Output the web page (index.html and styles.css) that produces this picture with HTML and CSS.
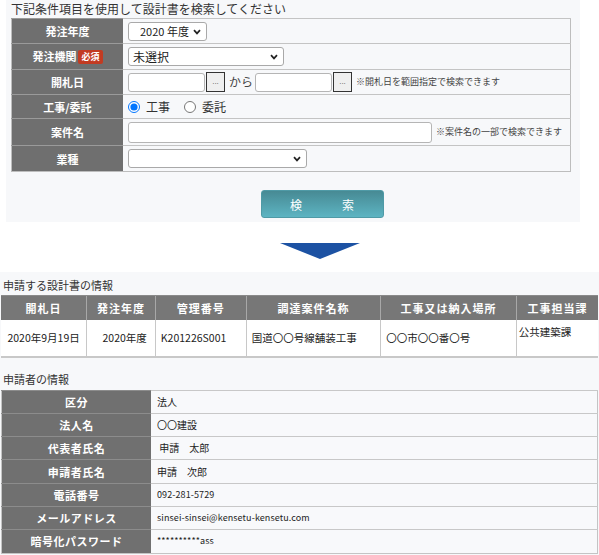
FILE: index.html
```html
<!DOCTYPE html>
<html lang="ja">
<head>
  <meta charset="UTF-8">
  <meta name="viewport" content="width=device-width, initial-scale=1.0">
  <title>設計書検索</title>
  <link rel="stylesheet" href="styles.css">
</head>
<body>

  <div class="search-panel">
    <p class="panel-title">下記条件項目を使用して設計書を検索してください</p>
    <table class="search-table">
      <tr class="row-1">
        <th>発注年度</th>
        <td>
          <span class="select-box select-year">
            <select><option>2020 年度</option></select>
            <svg class="chevron" width="8" height="6" viewBox="0 0 8 6"><path d="M1 1.2 L4 4.4 L7 1.2" fill="none" stroke="#222" stroke-width="1.7"/></svg>
          </span>
        </td>
      </tr>
      <tr class="row-2">
        <th>発注機関<span class="required">必須</span></th>
        <td>
          <span class="select-box select-org">
            <select><option>未選択</option></select>
            <svg class="chevron" width="8" height="6" viewBox="0 0 8 6"><path d="M1 1.2 L4 4.4 L7 1.2" fill="none" stroke="#222" stroke-width="1.7"/></svg>
          </span>
        </td>
      </tr>
      <tr class="row-3">
        <th>開札日</th>
        <td>
          <div class="field-line">
            <input type="text" class="input-date">
            <button class="pick-button">...</button>
            <span class="text-between">から</span>
            <input type="text" class="input-date">
            <button class="pick-button">...</button>
            <span class="note">※開札日を範囲指定で検索できます</span>
          </div>
        </td>
      </tr>
      <tr class="row-4">
        <th>工事/委託</th>
        <td>
          <div class="field-line">
            <label class="radio"><input type="radio" name="kind" checked> 工事</label>
            <label class="radio"><input type="radio" name="kind"> 委託</label>
          </div>
        </td>
      </tr>
      <tr class="row-5">
        <th>案件名</th>
        <td>
          <div class="field-line">
            <input type="text" class="input-name">
            <span class="note">※案件名の一部で検索できます</span>
          </div>
        </td>
      </tr>
      <tr class="row-6">
        <th>業種</th>
        <td>
          <span class="select-box select-kind">
            <select><option></option></select>
            <svg class="chevron" width="8" height="6" viewBox="0 0 8 6"><path d="M1 1.2 L4 4.4 L7 1.2" fill="none" stroke="#222" stroke-width="1.7"/></svg>
          </span>
        </td>
      </tr>
    </table>
    <button class="search-button">検　　　索</button>
  </div>

  <div class="arrow-area">
    <svg class="arrow" width="80" height="16" viewBox="0 0 80 16">
      <polygon points="0,0 80,0 40,16" fill="#1c52a3"/>
    </svg>
  </div>

  <div class="result-panel">
    <p class="section-title">申請する設計書の情報</p>
    <table class="doc-table">
      <tr class="doc-head">
        <th class="col-date">開札日</th>
        <th class="col-year">発注年度</th>
        <th class="col-no">管理番号</th>
        <th class="col-title">調達案件名称</th>
        <th class="col-place">工事又は納入場所</th>
        <th class="col-dept">工事担当課</th>
      </tr>
      <tr class="doc-row">
        <td class="center">2020年9月19日</td>
        <td class="right">2020年度</td>
        <td>K201226S001</td>
        <td>国道〇〇号線舗装工事</td>
        <td>〇〇市〇〇番〇号</td>
        <td class="top">公共建築課</td>
      </tr>
    </table>

    <p class="section-title section-second">申請者の情報</p>
    <table class="applicant-table">
      <tr><th>区分</th><td>法人</td></tr>
      <tr><th>法人名</th><td>〇〇建設</td></tr>
      <tr><th>代表者氏名</th><td>&nbsp;申請　太郎</td></tr>
      <tr><th>申請者氏名</th><td>申請　次郎</td></tr>
      <tr><th>電話番号</th><td class="mono">092-281-5729</td></tr>
      <tr><th>メールアドレス</th><td class="mono">sinsei-sinsei@kensetu-kensetu.com</td></tr>
      <tr><th>暗号化パスワード</th><td class="mono">**********ass</td></tr>
    </table>
  </div>

</body>
</html>
```

FILE: styles.css
```css
body {
  margin: 0;
  padding: 0;
  background-color: #ffffff;
  font-family: "Noto Sans CJK JP", sans-serif;
  color: #333;
  width: 599px;
}

p {
  margin: 0;
}

/* search form */

.search-panel {
  margin-left: 6px;
  width: 569px;
  height: 222px;
  padding-left: 5px;
  background-color: #f7f8fa;
  overflow: hidden;
}

.panel-title {
  font-size: 12px;
  line-height: 16px;
  padding-top: 1px;
  color: #333;
}

.search-table {
  margin-top: 1px;
  width: 560px;
  border-collapse: collapse;
  border: 1px solid #bdbdbd;
}

.search-table th {
  width: 111px;
  background-color: #6f6f6f;
  color: white;
  font-size: 11px;
  font-weight: bold;
  text-align: center;
  border-top: 1px solid #9a9a9a;
  padding: 0;
  line-height: 14px;
}

.search-table td {
  border-top: 1px solid #c4c4c4;
  padding: 0 0 0 5px;
  font-size: 12px;
  line-height: 14px;
}

.row-1 { height: 25px; }
.row-2 { height: 26px; }
.row-3 { height: 25px; }
.row-4 { height: 24px; }
.row-5 { height: 27px; }
.row-6 { height: 26px; }

.required {
  display: inline-block;
  margin-left: 2px;
  padding: 0 3px;
  background-color: #c23b22;
  color: white;
  font-size: 9px;
  line-height: 14px;
  border-radius: 2px;
  vertical-align: 1px;
}

.select-box {
  position: relative;
  display: block;
  height: 19px;
}

.select-box select {
  appearance: none;
  width: 100%;
  height: 19px;
  font-family: "Noto Sans CJK JP", sans-serif;
  font-size: 12px;
  color: #222;
  background-color: white;
  border: 1px solid #a9a9a9;
  border-radius: 3px;
  padding: 0 16px 0 4px;
  display: block;
}

.chevron {
  position: absolute;
  right: 6px;
  top: 7px;
}

.select-year { width: 79px; }
.select-year select { padding: 0 10px 0 11px; font-size: 11px; }
.select-org { width: 156px; }
.select-kind { width: 179px; }

.field-line {
  display: flex;
  align-items: center;
  white-space: nowrap;
}

input[type="text"] {
  height: 19px;
  box-sizing: border-box;
  border: 1px solid #b5b5b5;
  border-radius: 3px;
  background-color: white;
  padding: 0 3px;
}

.input-date { width: 77px; }
.input-name { width: 304px; height: 21px !important; }

.pick-button {
  width: 19px;
  height: 20px;
  margin-left: 1px;
  padding: 0;
  border: 1px solid #333;
  background-color: #efefef;
  color: #555;
  font-size: 8px;
  line-height: 10px;
}

.text-between {
  margin: 0 2px 0 4px;
  font-size: 12px;
  color: #444;
}

.note {
  margin-left: 4px;
  font-size: 9px;
  color: #444;
}

.radio {
  display: flex;
  align-items: center;
  margin-right: 14px;
  font-size: 12px;
  color: #333;
}

.radio input {
  margin: 0 6px 0 0;
  width: 12px;
  height: 12px;
}

.search-button {
  display: block;
  margin: 18px 0 0 250px;
  width: 123px;
  height: 28px;
  border: 1px solid #4f9aa6;
  border-radius: 3px;
  background: linear-gradient(#478a94, #5db4c2);
  color: white;
  font-family: "Noto Sans CJK JP", sans-serif;
  font-size: 12px;
  letter-spacing: 1px;
}

.arrow-area {
  height: 50px;
  padding-left: 280px;
  box-sizing: border-box;
  padding-top: 21px;
}

.arrow {
  display: block;
}

/* results */

.result-panel {
  background-color: #f7f8fa;
  height: 283px;
  padding-left: 1px;
}

.section-title {
  font-size: 11px;
  line-height: 14px;
  padding: 6px 0 3px 2px;
  color: #333;
}

.section-second {
  padding-top: 14px;
  padding-bottom: 4px;
}

.doc-table {
  width: 597px;
  border-collapse: collapse;
  border-bottom: 2px solid #c8c8c8;
}

.doc-head {
  height: 24px;
}

.doc-row {
  height: 37px;
}

.doc-table th {
  padding: 0;
  background-color: #777777;
  color: white;
  font-size: 11px;
  font-weight: bold;
  letter-spacing: 1px;
  line-height: 14px;
  border-left: 1px solid #a8a8a8;
  border-top: 1px solid #8a8a8a;
}

.doc-table th:first-child,
.doc-table td:first-child {
  border-left: none;
}

.col-date { width: 86px; }
.col-year { width: 68px; }
.col-no { width: 90px; }
.col-title { width: 135px; }
.col-place { width: 136px; }
.col-dept { width: 82px; }

.doc-table td {
  padding: 0 5px;
  background-color: white;
  font-size: 10.5px;
  line-height: 14px;
  color: #222;
  border-left: 1px solid #c8c8c8;
}

.doc-table .center { text-align: center; padding: 0; }
.doc-table .right { text-align: right; padding-right: 8px; }
.doc-table .top { vertical-align: top; padding: 5px 2px 0; }

.applicant-table {
  width: 597px;
  border-collapse: collapse;
  border: 1px solid #c4c4c4;
}

.applicant-table tr {
  height: 23.3px;
}

.applicant-table th {
  width: 149px;
  padding: 0;
  background-color: #707070;
  color: white;
  font-size: 11px;
  font-weight: bold;
  letter-spacing: 0.5px;
  line-height: 14px;
  border-top: 1px solid #8c8c8c;
}

.applicant-table td {
  padding: 0 6px;
  background-color: #f8f9fb;
  font-size: 10px;
  line-height: 14px;
  color: #222;
  border-top: 1px solid #c8c8c8;
}

.applicant-table .mono {
  font-size: 9px;
  letter-spacing: 0.1px;
}
```
